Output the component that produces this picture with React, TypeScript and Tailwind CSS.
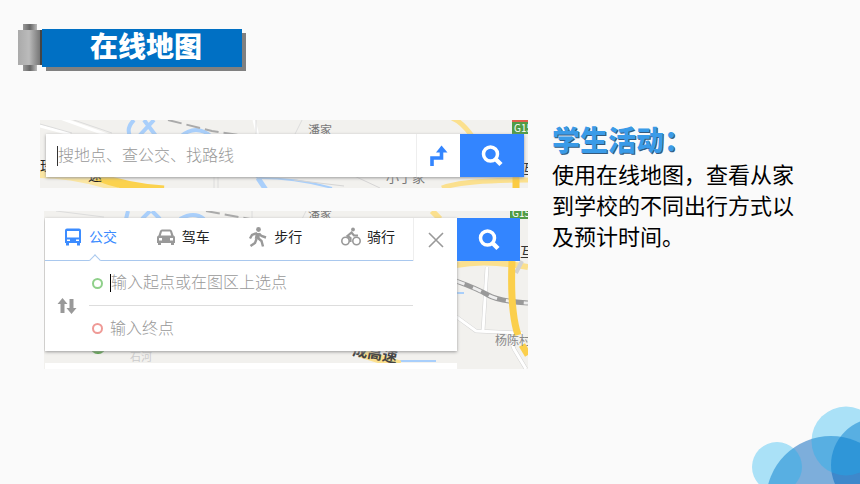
import React from "react";

const TopMap = () => (
  <svg
    className="absolute inset-0 h-full w-full"
    viewBox="0 0 488 68"
    preserveAspectRatio="xMidYMid slice"
    fill="none"
    aria-hidden="true"
  >
    <rect width="488" height="68" fill="#f2f1ee" />
    <path d="M0 6 30 14M20 -2 70 16M214 0 218 16" stroke="#fff" strokeWidth="3" />
    <path d="M0 4 32 13M28 -2 72 13M216 0v14M262 0l-8 16M174 54v14M178 54v14" stroke="#dcdcdc" />
    <path d="M94 0q-8 8 -4 16M99 16 114 0M104 0l12 16M140 17q16-14 32 0" stroke="#a9cffb" strokeWidth="4" />
    <path d="M128 0 172 11 206 16" stroke="#aaa" strokeWidth="2" strokeDasharray="14 5" />
    <path d="M220 58q36 0 72 10M216 56l10 12" stroke="#a9cffb" strokeWidth="2" />
    <path d="M218 58l8 12" stroke="#a9cffb" strokeWidth="5" />
    <path d="M254 60l50 6M310 54l30 14" stroke="#d5d5d5" />
    <path d="M0 54q34 0 78 14" stroke="#fbe6a2" strokeWidth="8" />
    <path d="M56 56q32 12 68 14" stroke="#fbd24e" strokeWidth="9" />
    <path d="M412 -2q10 4 20 18M402 68q20-8 86-8" stroke="#fbe08e" strokeWidth="5" />
    <path d="M476 54v14" stroke="#fbcb42" strokeWidth="7" />
    <rect x="472" y="1" width="20" height="13" fill="#529b46" />
    <path d="M472 1h16" stroke="#e2604e" strokeWidth="2" />
    <g fill="#777" fontFamily="'Noto Sans CJK SC', sans-serif">
      <text x="268" y="15" fontSize="12">潘家</text>
      <text x="346" y="62" fontSize="13">小丁家</text>
      <text x="0" y="51" fontSize="14" fill="#222">珠</text>
      <text x="48" y="60" fontSize="14" fill="#222">速</text>
      <text x="482" y="54" fontSize="14" fill="#333">互</text>
      <text x="474" y="12" fontSize="10" fill="#fff">G15</text>
    </g>
  </svg>
);

const BottomMap = () => (
  <svg
    className="absolute inset-0 h-full w-full"
    viewBox="0 0 484 158"
    preserveAspectRatio="xMidYMid slice"
    fill="none"
    aria-hidden="true"
  >
    <rect width="484" height="158" fill="#f2f1ee" />
    <path d="M84 0l-2 8M98 8 106 0M108 0l8 8M136 8q14-8 24 0" stroke="#a9cffb" strokeWidth="4" />
    <path d="M162 0 206 8" stroke="#aaa" strokeWidth="2" strokeDasharray="14 5" />
    <path d="M12 0 60 6M208 0v8M262 0l-4 8" stroke="#dcdcdc" />
    <path d="M388 0l8 8M412 54q30-6 72 2" stroke="#fbe08e" strokeWidth="6" />
    <path d="M443 56l-4 64M410 104l22 16 46 2M464 122l6 16 12 20M478 50l-6 12" stroke="#d2d2d2" strokeWidth="4" />
    <path d="M443 56l-4 64M410 104l22 16 46 2M464 122l6 16 12 20" stroke="#fff" strokeWidth="3" />
    <path d="M412 70q22 8 32 14t40 8" stroke="#999" strokeWidth="5" />
    <path d="M412 70q22 8 32 14t40 8" stroke="#eee" strokeWidth="3" strokeDasharray="9 9" />
    <path d="M412 82h8M356 150h36" stroke="#a9cffb" strokeWidth="2" />
    <path d="M468 50q-2 50 6 74" stroke="#fbcf4c" strokeWidth="7" />
    <path d="M478 134l6 10" stroke="#fbcf4c" strokeWidth="7" />
    <path d="M316 142l40 12" stroke="#fbe08e" strokeWidth="9" />
    <circle cx="54" cy="135" r="8" fill="#4f9f3f" />
    <rect x="466" width="18" height="8" fill="#529b46" />
    <g fill="#777" fontFamily="'Noto Sans CJK SC', sans-serif">
      <text x="264" y="8" fontSize="12">潘家</text>
      <text x="468" y="6" fontSize="10" fill="#fff">G15</text>
      <text x="476" y="46" fontSize="14" fill="#333">互</text>
      <text x="451" y="134" fontSize="12" fill="#888">杨陈村</text>
      <text x="308" y="144" fontSize="15" fontWeight="700" fill="#444" transform="rotate(10 308 144)">成高速</text>
      <text x="86" y="150" fontSize="11" fill="#ccc">石河</text>
    </g>
  </svg>
);

const SearchIcon = () => (
  <svg className="h-6 w-6" viewBox="0 0 24 24" fill="none" stroke="#fff" aria-hidden="true">
    <circle cx="10.500" cy="10" r="7" strokeWidth="3.500" />
    <path d="M16 15.500 21 20.500" strokeWidth="4.500" />
  </svg>
);

const RouteIcon = () => (
  <svg className="h-6 w-6" viewBox="0 0 24 24" aria-hidden="true">
    <path d="M5 22V14H14.500V7" fill="none" stroke="#3385ff" strokeWidth="3.600" />
    <path d="M9 8.500 14.500 1.500l6 7z" fill="#3385ff" />
  </svg>
);

const BusIcon = () => (
  <svg className="h-5 w-5" viewBox="0 0 20 20" aria-hidden="true">
    <path
      fill="#3c8cff"
      fillRule="evenodd"
      d="M4 1.500h12a2 2 0 0 1 2 2v12.500h-1v2.500h-3V16H6v2.500H3V16H2V3.500a2 2 0 0 1 2-2zM4 4v6.500h12V4zM4 12.500v1.500h3v-1.500zM13 12.500v1.500h3v-1.500z"
    />
  </svg>
);

const CarIcon = () => (
  <svg className="h-5 w-5" viewBox="0 0 20 20" aria-hidden="true">
    <path
      fill="#999"
      fillRule="evenodd"
      d="M6 2.500h8q1.500 0 2 1.500L17.500 8.500Q19 9 19 10.500v5.500h-1v2h-3v-2H5v2H2v-2H1v-5.500q0-1.500 1.500-2L4 4Q4.500 2.500 6 2.500zM6 4.500 4.800 8.500h10.400L14 4.500zM3 11v2.500h3V11zM14 11v2.500h3V11z"
    />
  </svg>
);

const WalkIcon = () => (
  <svg className="h-5 w-5" viewBox="0 0 20 20" fill="none" stroke="#999" aria-hidden="true">
    <circle cx="10.500" cy="2.500" r="2.400" fill="#999" stroke="none" />
    <path d="M10 6 9 12" strokeWidth="4.500" />
    <path d="M9 6 4 8 2 11.500M11 6.500 13.500 9 18 10.500M10 11l3.500 3 1.500 5.500M8.500 12 7 16l-4.500 3" strokeWidth="2.400" />
  </svg>
);

const BikeIcon = () => (
  <svg className="h-5 w-5" viewBox="0 0 20 20" fill="none" stroke="#999" strokeWidth="1.600" aria-hidden="true">
    <circle cx="4.500" cy="14" r="3.700" />
    <circle cx="15.500" cy="14" r="3.700" />
    <circle cx="12" cy="2.500" r="1.900" fill="#999" stroke="none" />
    <path d="M9.500 15v-4L6.500 9 10.500 5.500 13 8.500h4" strokeWidth="2.200" />
  </svg>
);

const SwapIcon = () => (
  <svg className="h-5 w-5" viewBox="0 0 20 20" fill="#999" aria-hidden="true">
    <path d="M5.500 2 10.500 8H7.500v9h-4V8H.500zM14.500 18l-5-6h3V3h4v9h3z" />
  </svg>
);

const modes = [
  { id: "bus", label: "公交", icon: <BusIcon />, active: true },
  { id: "car", label: "驾车", icon: <CarIcon />, active: false },
  { id: "walk", label: "步行", icon: <WalkIcon />, active: false },
  { id: "bike", label: "骑行", icon: <BikeIcon />, active: false },
];

const TitleBanner = () => (
  <header className="flex items-center pl-[18px] pt-6">
    <div className="z-10 flex h-[47px] w-6 flex-col items-center">
      <div className="h-1.5 w-3.5 bg-linear-to-r from-[#999] via-[#666] to-[#bbb]" />
      <div className="w-full flex-1 border-r-2 border-[#444] bg-linear-to-r from-[#aaa] via-[#bbb] to-[#777]" />
      <div className="h-1.5 w-3.5 bg-linear-to-r from-[#999] via-[#666] to-[#bbb]" />
    </div>
    <div className="flex h-[38px] w-50 items-center justify-center bg-[#0070c4] pl-2 shadow-[4px_4px_0_#808080]">
      <h1 className="text-[28px] leading-8 font-black text-white">在线地图</h1>
    </div>
  </header>
);

const SearchBox = () => (
  <section className="relative overflow-hidden pt-3.5 pr-1 pb-[11px] pl-1.5">
    <TopMap />
    <form className="relative flex h-[43px] shadow-[0_1px_3px_#999]">
      <label className="flex min-w-0 flex-1 items-center bg-white pl-[11px]">
        <span className="h-5 w-px bg-[#333]" />
        <input
          className="min-w-0 flex-1 text-[16px] leading-6 font-light outline-none placeholder:text-[#999]"
          aria-label="搜索地图"
          placeholder="搜地点、查公交、找路线"
        />
      </label>
      <button type="button" aria-label="路线" className="flex w-11 items-center justify-center border-l border-[#eee] bg-white">
        <RouteIcon />
      </button>
      <button type="button" aria-label="搜索" className="flex w-16 items-center justify-center bg-[#3385ff]">
        <SearchIcon />
      </button>
    </form>
  </section>
);

const RoutePanel = () => (
  <section className="relative ml-1 overflow-hidden pt-[7px] pr-2 pl-px">
    <BottomMap />
    <form className="relative flex items-start">
      <div className="min-w-0 flex-1 bg-white shadow-[0_1px_3px_#999]">
        <div className="flex h-[43px]">
          <div className="flex flex-1 justify-between border-b border-[#a9c8ee] pr-[18px] pl-[18px]">
            {modes.map((mode) => (
              <button
                key={mode.id}
                type="button"
                className={`relative flex items-center gap-1.5 pb-1 text-[14px] leading-5 ${mode.active ? "text-[#3c8cff]" : "text-[#222]"}`}
              >
                {mode.icon}
                {mode.label}
                {mode.active && (
                  <span className="absolute -bottom-1 left-7 h-2 w-2 rotate-45 border-t border-l border-[#a9c8ee] bg-white" />
                )}
              </button>
            ))}
          </div>
          <button type="button" aria-label="关闭" className="flex w-11 items-center justify-center border-l border-[#eee]">
            <svg className="h-4 w-4" viewBox="0 0 16 16" stroke="#999" strokeWidth="1.600" aria-hidden="true">
              <path d="M1 1 15 15M15 1 1 15" />
            </svg>
          </button>
        </div>
        <div className="flex pr-11">
          <button type="button" aria-label="交换起点和终点" className="flex w-11 items-center justify-center">
            <SwapIcon />
          </button>
          <div className="flex-1">
            <label className="flex h-[45px] items-center border-b border-[#ddd] pl-[3px]">
              <span className="mr-[7px] h-[11px] w-[11px] rounded-full border-2 border-[#8fd08a]" />
              <span className="h-[18px] w-px bg-black" />
              <input
                className="min-w-0 flex-1 text-[16px] leading-6 font-light outline-none placeholder:text-[#999]"
                aria-label="起点"
                placeholder="输入起点或在图区上选点"
              />
            </label>
            <label className="flex h-[45px] items-center pl-[3px]">
              <span className="mr-[7px] h-[11px] w-[11px] rounded-full border-2 border-[#ef9a96]" />
              <input
                className="min-w-0 flex-1 text-[16px] leading-6 font-light outline-none placeholder:text-[#999]"
                aria-label="终点"
                placeholder="输入终点"
              />
            </label>
          </div>
        </div>
      </div>
      <button type="button" aria-label="搜索路线" className="flex h-[43px] w-[63px] items-center justify-center bg-[#3385ff]">
        <SearchIcon />
      </button>
    </form>
    <div className="relative mt-3 mr-[63px] h-1.5 bg-white" />
  </section>
);

const Bubbles = () => (
  <svg className="absolute right-0 bottom-0 h-[84px] w-30" viewBox="0 0 120 84" aria-hidden="true">
    <circle cx="91" cy="101" r="65" fill="#0062bc" fillOpacity="0.5" />
    <circle cx="138" cy="65" r="47" fill="#0062bc" fillOpacity="0.5" />
    <circle cx="106" cy="41" r="34.500" fill="#14b2f1" fillOpacity="0.35" />
    <circle cx="37" cy="67" r="25" fill="#14b2f1" fillOpacity="0.35" />
  </svg>
);

export default function App() {
  return (
    <div className="relative min-h-screen overflow-hidden bg-[#fafafa] font-['Liberation_Sans','Noto_Sans_CJK_SC',sans-serif]">
      <TitleBanner />
      <main className="grid grid-cols-[2fr_1fr] gap-6 pt-[49px] pr-16 pl-10">
        <div className="flex flex-col gap-[23px]">
          <SearchBox />
          <RoutePanel />
        </div>
        <article className="pt-1">
          <h2 className="text-[28px] leading-9 font-black text-[#3a9be8] [text-shadow:1px_1px_0_#35597c]">{"学生活动\uFF1A"}</h2>
          <p className="text-[22px] leading-[31px] text-black">
            {"使用在线地图\uFF0C查看从家到学校的不同出行方式以及预计时间。"}
          </p>
        </article>
      </main>
      <Bubbles />
    </div>
  );
}
